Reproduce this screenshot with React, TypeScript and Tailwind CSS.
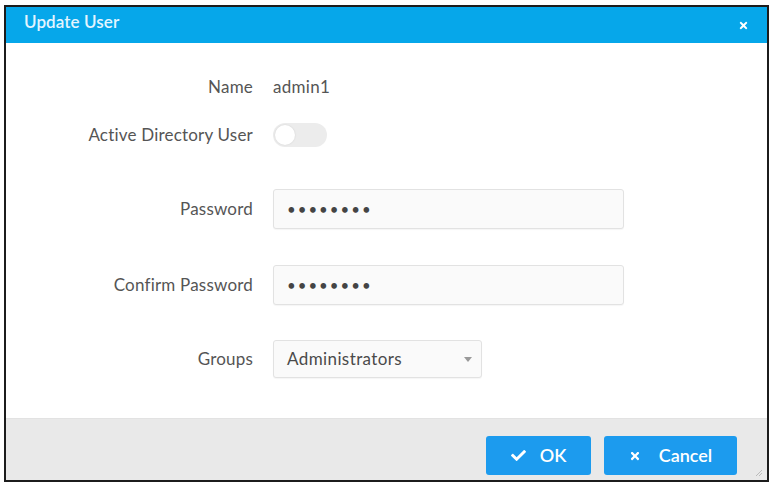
import React from "react";
import { FaTimes, FaCheck } from "react-icons/fa";

const labelCls = "w-[247px] text-right text-[17px] tracking-[0.2px] text-[#555555] shrink-0";

export default function App() {
  return (
    <div className="w-[773px] h-[487px] bg-white relative overflow-hidden" style={{ fontFamily: "Lato, 'Open Sans', sans-serif" }}>
      <div className="absolute left-[4px] top-[5px] w-[765px] h-[477px] border-2 border-[#1c1c1c] flex flex-col bg-white">
        {/* header */}
        <div className="h-[36px] bg-[#06a7ea] flex items-start justify-between shrink-0">
          <div className="pl-[18px] pt-[2px] text-[17px] font-semibold text-[#e4f5ff] tracking-[0.1px]">Update User</div>
          <div className="pr-[18px] pt-[13px] text-white">
            <FaTimes className="w-[11px] h-[11px]" />
          </div>
        </div>
        {/* body */}
        <div className="flex-1 flex flex-col pt-[32px]">
          <div className="flex items-center h-[24px] gap-[20px]">
            <div className={labelCls}>Name</div>
            <div className="text-[17px] tracking-[0.3px] text-[#555555]">admin1</div>
          </div>
          <div className="flex items-center h-[24px] gap-[20px] mt-[24px]">
            <div className={labelCls}>Active Directory User</div>
            <div className="w-[54px] h-[24px] rounded-full bg-[#ececec] p-[2px] flex items-center">
              <div className="w-[20px] h-[20px] rounded-full bg-white shadow-[0_0_2px_rgba(0,0,0,0.12)]" />
            </div>
          </div>
          <div className="flex items-center h-[40px] gap-[20px] mt-[42px]">
            <div className={labelCls}>Password</div>
            <div className="w-[351px] h-[40px] rounded-[3px] border border-[#e2e2e2] bg-[#fafafa] flex items-center pl-[13px] shadow-[0_1px_1px_rgba(0,0,0,0.04)]">
              <span className="text-[15px] tracking-[2px] text-[#444444]">••••••••</span>
            </div>
          </div>
          <div className="flex items-center h-[40px] gap-[20px] mt-[36px]">
            <div className={labelCls}>Confirm Password</div>
            <div className="w-[351px] h-[40px] rounded-[3px] border border-[#e2e2e2] bg-[#fafafa] flex items-center pl-[13px] shadow-[0_1px_1px_rgba(0,0,0,0.04)]">
              <span className="text-[15px] tracking-[2px] text-[#444444]">••••••••</span>
            </div>
          </div>
          <div className="flex items-center h-[38px] gap-[20px] mt-[35px]">
            <div className={labelCls}>Groups</div>
            <div className="w-[209px] h-[38px] rounded-[3px] border border-[#e2e2e2] bg-[#fafafa] flex items-center justify-between pl-[13px] pr-[9px] shadow-[0_1px_1px_rgba(0,0,0,0.04)]">
              <span className="text-[17px] tracking-[0.4px] text-[#4a4a4a]">Administrators</span>
              <svg width="8" height="5" viewBox="0 0 8 5"><path d="M0 0 L8 0 L4 5 Z" fill="#9a9a9a" /></svg>
            </div>
          </div>
        </div>
        {/* footer */}
        <div className="h-[62px] bg-[#e9e9e9] border-t border-[#e2e2e2] shrink-0 flex items-end justify-end gap-[13px] pr-[30px] pb-[5px] relative">
          <button className="w-[105px] h-[39px] rounded-[3px] bg-[#1c9bee] text-white text-[18px] font-semibold flex items-center justify-center gap-[14px]">
            <FaCheck className="w-[15px] h-[15px]" />
            <span>OK</span>
          </button>
          <button className="w-[133px] h-[39px] rounded-[3px] bg-[#1c9bee] text-white text-[18px] font-semibold flex items-center justify-center gap-[18px]">
            <FaTimes className="w-[12px] h-[12px]" />
            <span>Cancel</span>
          </button>
          <svg className="absolute right-[4px] bottom-[3px]" width="9" height="9" viewBox="0 0 9 9">
            <path d="M8 2 L2 8 M8 5 L5 8" stroke="#bbbbbb" strokeWidth="1" />
          </svg>
        </div>
      </div>
    </div>
  );
}
